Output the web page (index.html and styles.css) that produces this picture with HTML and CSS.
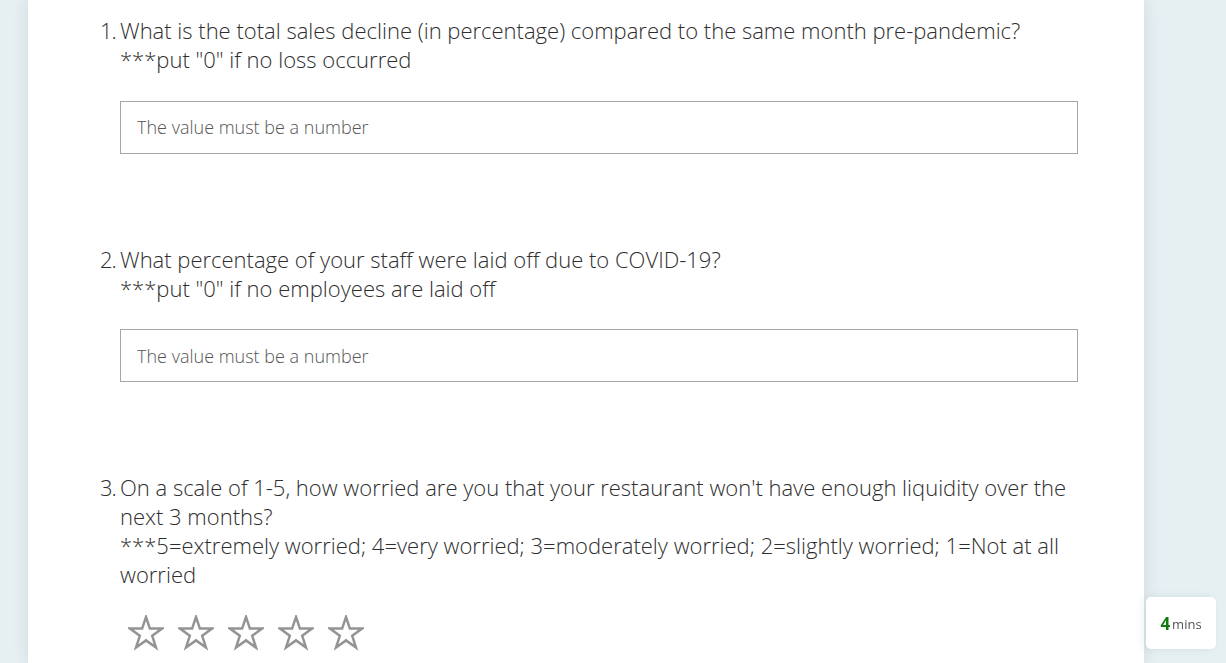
FILE: index.html
```html
<!DOCTYPE html>
<html>
<head>
<meta charset="utf-8">
<link rel="stylesheet" href="styles.css">
</head>
<body>
<div class="page">
  <main class="card">
    <section class="question">
      <div class="q-title">
        <span class="q-num">1.</span>
        <div class="q-text">What is the total sales decline (in percentage) compared to the same month pre-pandemic?<br>***put "0" if no loss occurred</div>
      </div>
      <div class="answer"><input class="text-input" type="text" placeholder="The value must be a number"></div>
    </section>
    <section class="question">
      <div class="q-title">
        <span class="q-num">2.</span>
        <div class="q-text">What percentage of your staff were laid off due to COVID-19?<br>***put "0" if no employees are laid off</div>
      </div>
      <div class="answer"><input class="text-input" type="text" placeholder="The value must be a number"></div>
    </section>
    <section class="question">
      <div class="q-title">
        <span class="q-num">3.</span>
        <div class="q-text">On a scale of 1-5, how worried are you that your restaurant won't have enough liquidity over the next 3 months?<br>***5=extremely worried; 4=very worried; 3=moderately worried; 2=slightly worried; 1=Not at all worried</div>
      </div>
      <div class="stars">
        <svg class="star" viewBox="0 0 36 36"><path d="M18 2 L21.9 13.6 L34 13.6 L24.2 20.8 L28 32.6 L18 25.4 L8 32.6 L11.8 20.8 L2 13.6 L14.1 13.6 Z"/></svg>
        <svg class="star" viewBox="0 0 36 36"><path d="M18 2 L21.9 13.6 L34 13.6 L24.2 20.8 L28 32.6 L18 25.4 L8 32.6 L11.8 20.8 L2 13.6 L14.1 13.6 Z"/></svg>
        <svg class="star" viewBox="0 0 36 36"><path d="M18 2 L21.9 13.6 L34 13.6 L24.2 20.8 L28 32.6 L18 25.4 L8 32.6 L11.8 20.8 L2 13.6 L14.1 13.6 Z"/></svg>
        <svg class="star" viewBox="0 0 36 36"><path d="M18 2 L21.9 13.6 L34 13.6 L24.2 20.8 L28 32.6 L18 25.4 L8 32.6 L11.8 20.8 L2 13.6 L14.1 13.6 Z"/></svg>
        <svg class="star" viewBox="0 0 36 36"><path d="M18 2 L21.9 13.6 L34 13.6 L24.2 20.8 L28 32.6 L18 25.4 L8 32.6 L11.8 20.8 L2 13.6 L14.1 13.6 Z"/></svg>
      </div>
    </section>
  </main>
</div>
<div class="time-badge"><span class="time-num">4</span><span class="time-unit">mins</span></div>
</body>
</html>
```

FILE: styles.css
```css
html, body {
  margin: 0;
  padding: 0;
  height: 100%;
  overflow: hidden;
}
body {
  background: #e6eff2;
  font-family: "Open Sans", "Noto Sans", sans-serif;
  color: #333333;
}
.page {
  display: flex;
  height: 100%;
}
.card {
  margin-left: 28px;
  width: 1116px;
  background: #ffffff;
  box-shadow: 0 0 16px rgba(0, 60, 80, 0.10);
  padding: 16px 0 0 72px;
  box-sizing: border-box;
}
.question {
  margin-bottom: 91px;
}
.q-title {
  display: flex;
  font-size: 22px;
  font-weight: 300;
  line-height: 29px;
  width: 980px;
  color: #2e2e2e;
}
.q-num {
  flex: 0 0 20px;
  letter-spacing: -1px;
}
.q-text {
  flex: 1;
  width: 958px;
}
.answer {
  margin: 26.5px 0 0 20px;
}
.text-input {
  display: block;
  box-sizing: border-box;
  width: 958px;
  height: 53px;
  border: 1px solid #a6a6a6;
  border-radius: 0;
  padding: 0 16px;
  font-family: "Open Sans", "Noto Sans", sans-serif;
  font-size: 18px;
  font-weight: 300;
  color: #333;
  outline: none;
}
.text-input::placeholder {
  color: #555555;
}
.stars {
  display: flex;
  gap: 14px;
  margin: 26px 0 0 28px;
}
.star {
  width: 36px;
  height: 36px;
  fill: none;
  stroke: #949494;
  stroke-width: 2.5;
  stroke-linejoin: miter;
}
.time-badge {
  position: fixed;
  left: 1146px;
  top: 597px;
  width: 70px;
  height: 52px;
  background: #fff;
  border-radius: 5px;
  box-shadow: -3px 0 8px rgba(0, 60, 80, 0.08);
  display: flex;
  align-items: center;
  justify-content: center;
  gap: 2px;
}
.time-num {
  color: #107c10;
  font-weight: 700;
  font-size: 17px;
}
.time-unit {
  color: #555;
  font-size: 13px;
  margin-top: 2px;
}
```
